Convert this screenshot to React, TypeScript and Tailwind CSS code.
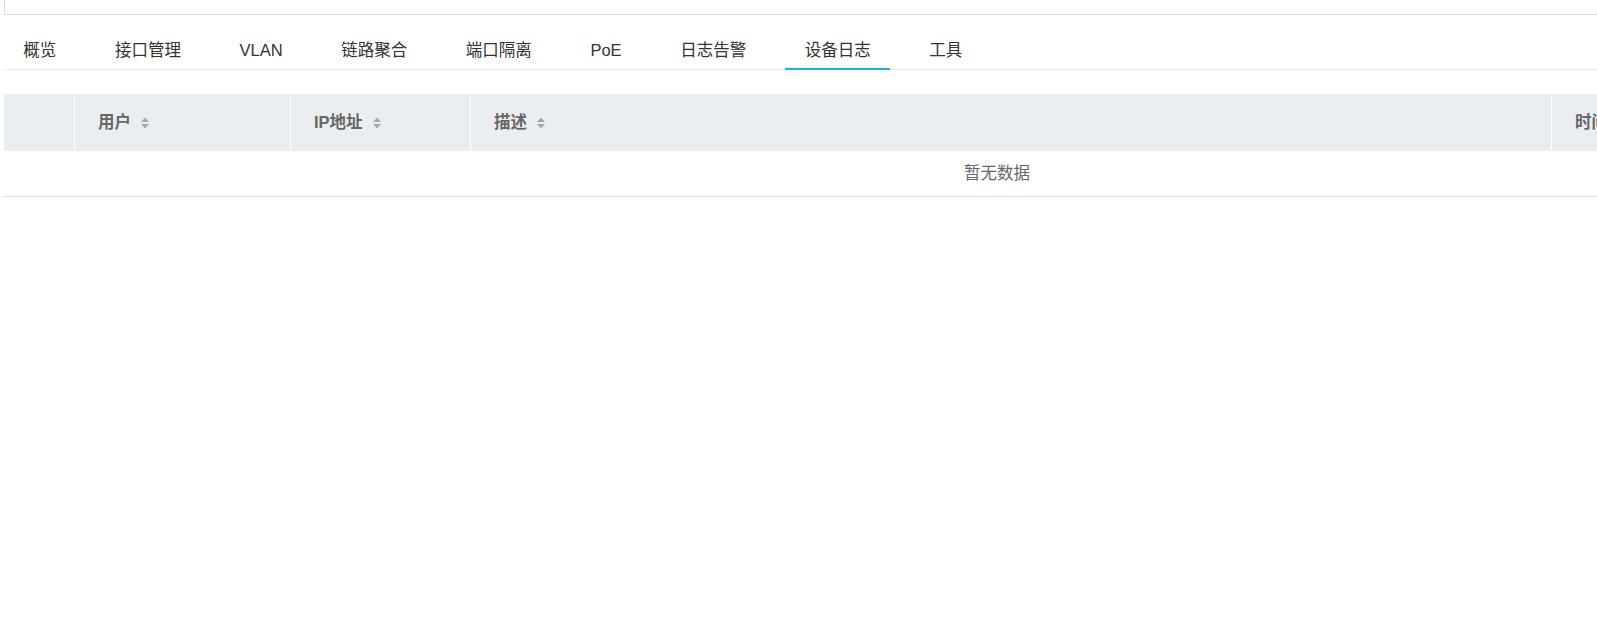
const tabs = ['概览', '接口管理', 'VLAN', '链路聚合', '端口隔离', 'PoE', '日志告警', '设备日志', '工具']
const active = '设备日志'

function SortIcon() {
  return (
    <svg width="10" height="14" viewBox="0 0 10 14" className="ml-[9px] shrink-0">
      <path d="M5 1.5 L9 6 H1 Z" fill="#a4a7ac" />
      <path d="M5 12.5 L9 8 H1 Z" fill="#a4a7ac" />
    </svg>
  )
}

const columns = [
  { label: '', w: 'w-[71px]' },
  { label: '用户', w: 'w-[216px]' },
  { label: 'IP地址', w: 'w-[180px]' },
  { label: '描述', w: 'w-[1081px]' },
  { label: '时间', w: 'w-[434px]' },
]

export default function App() {
  return (
    <div className="w-[1597px] h-[637px] overflow-hidden bg-white font-['Liberation_Sans','Noto_Sans_CJK_SC',sans-serif]">
      <div className="w-[1986px] ml-[4px]">
        <div className="h-[15px] border-l border-b border-[#dcdfe3]" />

        <nav className="mt-[14px] flex gap-[20px] border-b border-[#e9ecf3]">
          {tabs.map((t) => (
            <div
              key={t}
              className="relative h-[40px] pt-[2px] px-[19.3px] flex items-center text-[16.5px] text-[#333]"
            >
              {t}
              {t === active && (
                <span className="absolute left-0 right-0 bottom-[-1px] h-[2px] bg-[#18b2ec]" />
              )}
            </div>
          ))}
        </nav>

        <div className="mt-[24px]">
          <div className="flex h-[57px] bg-[#ebeef1]">
            {columns.map((c, i) => (
              <div
                key={i}
                className={`${c.w} shrink-0 flex items-center pl-[23px] border-r border-white text-[16.5px] font-bold text-[#666]`}
              >
                {c.label && (
                  <>
                    <span>{c.label}</span>
                    {c.label !== '时间' && <SortIcon />}
                  </>
                )}
              </div>
            ))}
          </div>
          <div className="h-[46px] flex items-center justify-center border-b border-[#dcdcec] text-[16.5px] text-[#666]">
            暂无数据
          </div>
        </div>
      </div>
    </div>
  )
}
